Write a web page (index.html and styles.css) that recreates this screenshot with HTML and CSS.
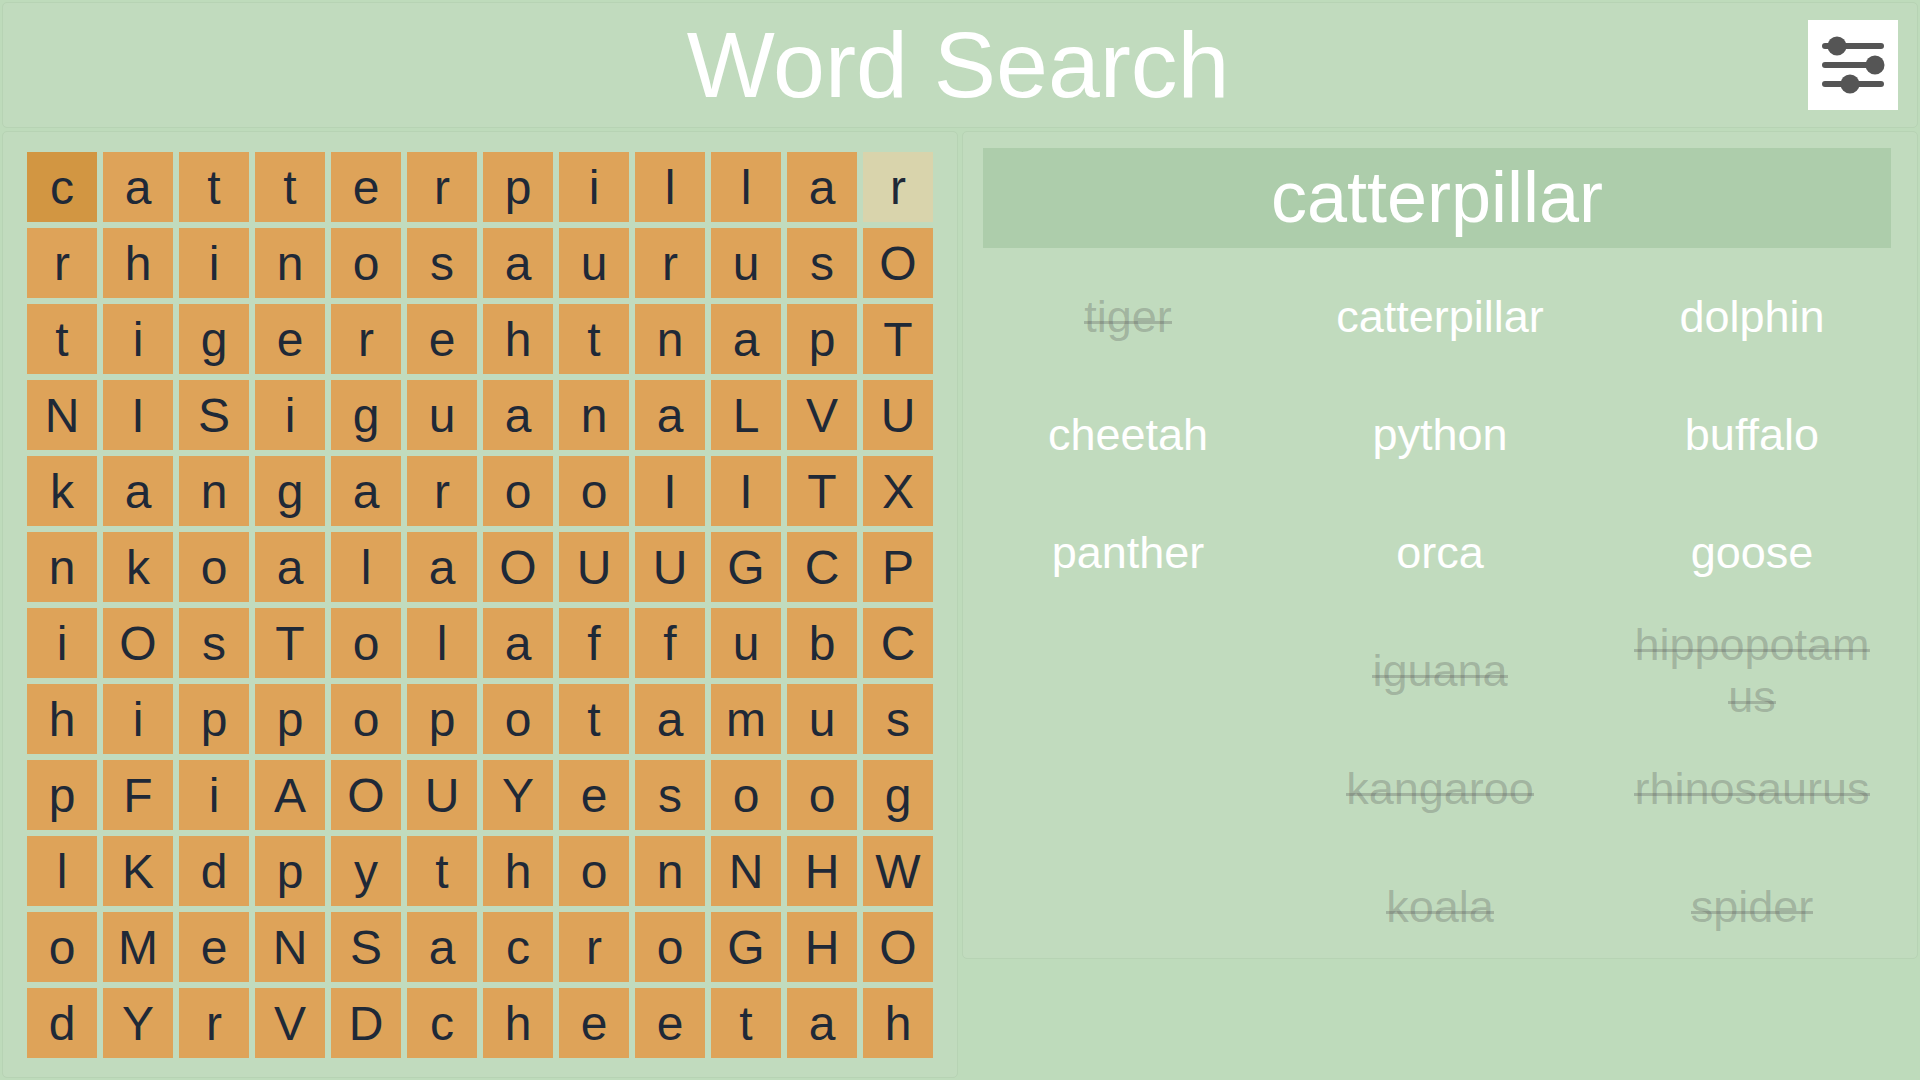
FILE: index.html
```html
<!DOCTYPE html>
<html lang="en">
<head>
    <meta charset="UTF-8">
    <title>Word Search</title>
    <link rel="stylesheet" href="styles.css">
</head>
<body>
    <header class="top panel">
        <h1 class="title">Word Search</h1>
        <button class="settings" type="button" aria-label="Settings">
            <svg width="90" height="90" viewBox="0 0 90 90">
                <g stroke="#555" stroke-width="6" stroke-linecap="round">
                    <line x1="17" y1="26" x2="73" y2="26"/>
                    <line x1="17" y1="45" x2="73" y2="45"/>
                    <line x1="17" y1="64" x2="73" y2="64"/>
                </g>
                <g fill="#555">
                    <circle cx="29" cy="26" r="9.5"/>
                    <circle cx="67" cy="45" r="9.5"/>
                    <circle cx="42" cy="64" r="9.5"/>
                </g>
            </svg>
        </button>
    </header>

    <main class="game">
        <section class="board panel">
            <div class="cell start">c</div><div class="cell">a</div><div class="cell">t</div><div class="cell">t</div><div class="cell">e</div><div class="cell">r</div><div class="cell">p</div><div class="cell">i</div><div class="cell">l</div><div class="cell">l</div><div class="cell">a</div><div class="cell end">r</div>
            <div class="cell">r</div><div class="cell">h</div><div class="cell">i</div><div class="cell">n</div><div class="cell">o</div><div class="cell">s</div><div class="cell">a</div><div class="cell">u</div><div class="cell">r</div><div class="cell">u</div><div class="cell">s</div><div class="cell">O</div>
            <div class="cell">t</div><div class="cell">i</div><div class="cell">g</div><div class="cell">e</div><div class="cell">r</div><div class="cell">e</div><div class="cell">h</div><div class="cell">t</div><div class="cell">n</div><div class="cell">a</div><div class="cell">p</div><div class="cell">T</div>
            <div class="cell">N</div><div class="cell">I</div><div class="cell">S</div><div class="cell">i</div><div class="cell">g</div><div class="cell">u</div><div class="cell">a</div><div class="cell">n</div><div class="cell">a</div><div class="cell">L</div><div class="cell">V</div><div class="cell">U</div>
            <div class="cell">k</div><div class="cell">a</div><div class="cell">n</div><div class="cell">g</div><div class="cell">a</div><div class="cell">r</div><div class="cell">o</div><div class="cell">o</div><div class="cell">I</div><div class="cell">I</div><div class="cell">T</div><div class="cell">X</div>
            <div class="cell">n</div><div class="cell">k</div><div class="cell">o</div><div class="cell">a</div><div class="cell">l</div><div class="cell">a</div><div class="cell">O</div><div class="cell">U</div><div class="cell">U</div><div class="cell">G</div><div class="cell">C</div><div class="cell">P</div>
            <div class="cell">i</div><div class="cell">O</div><div class="cell">s</div><div class="cell">T</div><div class="cell">o</div><div class="cell">l</div><div class="cell">a</div><div class="cell">f</div><div class="cell">f</div><div class="cell">u</div><div class="cell">b</div><div class="cell">C</div>
            <div class="cell">h</div><div class="cell">i</div><div class="cell">p</div><div class="cell">p</div><div class="cell">o</div><div class="cell">p</div><div class="cell">o</div><div class="cell">t</div><div class="cell">a</div><div class="cell">m</div><div class="cell">u</div><div class="cell">s</div>
            <div class="cell">p</div><div class="cell">F</div><div class="cell">i</div><div class="cell">A</div><div class="cell">O</div><div class="cell">U</div><div class="cell">Y</div><div class="cell">e</div><div class="cell">s</div><div class="cell">o</div><div class="cell">o</div><div class="cell">g</div>
            <div class="cell">l</div><div class="cell">K</div><div class="cell">d</div><div class="cell">p</div><div class="cell">y</div><div class="cell">t</div><div class="cell">h</div><div class="cell">o</div><div class="cell">n</div><div class="cell">N</div><div class="cell">H</div><div class="cell">W</div>
            <div class="cell">o</div><div class="cell">M</div><div class="cell">e</div><div class="cell">N</div><div class="cell">S</div><div class="cell">a</div><div class="cell">c</div><div class="cell">r</div><div class="cell">o</div><div class="cell">G</div><div class="cell">H</div><div class="cell">O</div>
            <div class="cell">d</div><div class="cell">Y</div><div class="cell">r</div><div class="cell">V</div><div class="cell">D</div><div class="cell">c</div><div class="cell">h</div><div class="cell">e</div><div class="cell">e</div><div class="cell">t</div><div class="cell">a</div><div class="cell">h</div>
        </section>

        <section class="side panel">
            <div class="current">catterpillar</div>
            <ul class="words">
                <li class="found"><span>tiger</span></li>
                <li>catterpillar</li>
                <li>dolphin</li>
                <li>cheetah</li>
                <li>python</li>
                <li>buffalo</li>
                <li>panther</li>
                <li>orca</li>
                <li>goose</li>
                <li></li>
                <li class="found"><span>iguana</span></li>
                <li class="found"><div><span>hippopotamus</span></div></li>
                <li></li>
                <li class="found"><span>kangaroo</span></li>
                <li class="found"><span>rhinosaurus</span></li>
                <li></li>
                <li class="found"><span>koala</span></li>
                <li class="found"><span>spider</span></li>
            </ul>
        </section>
    </main>
</body>
</html>
```

FILE: styles.css
```css
@charset "utf-8";

* { box-sizing: border-box; margin: 0; padding: 0; }

body {
    height: 1080px;
    padding: 2px;
    overflow: hidden;
    background: #bedbbb;
    font-family: "Liberation Sans", Arial, sans-serif;
}

.panel {
    background: #c1dbbe;
    border: 1px solid #b7d3b4;
    border-radius: 5px;
}

.top {
    display: grid;
    grid-template-columns: 1fr auto 1fr;
    align-items: center;
    height: 126px;
    padding: 0 19px 0 15px;
}

.title {
    grid-column: 2;
    padding-top: 2px;
    color: #fff;
    font-size: 93.3px;
    font-weight: 400;
    line-height: 1;
}

.settings {
    grid-column: 3;
    justify-self: end;
    width: 90px;
    height: 90px;
    border: 0;
    background: #fff;
}

.settings svg { display: block; }

.game {
    display: grid;
    grid-template-columns: 956px 956px;
    gap: 4px;
    align-items: start;
    margin-top: 3px;
}

.board {
    display: grid;
    grid-template-columns: repeat(12, 70px);
    grid-auto-rows: 70px;
    gap: 6px;
    height: 947px;
    padding: 20px 24px;
}

.cell {
    display: flex;
    align-items: center;
    justify-content: center;
    background: #dea359;
    color: #1f2937;
    font-size: 48px;
}

.cell.start { background: #d29642; }
.cell.end { background: #d9d4ac; }

.side {
    height: 828px;
    padding: 16px 20px 0;
}

.current {
    width: 908px;
    height: 100px;
    background: #adcdab;
    color: #fff;
    font-size: 72px;
    line-height: 98px;
    text-align: center;
}

.words {
    display: grid;
    grid-template-columns: repeat(3, 290px);
    grid-auto-rows: 104px;
    gap: 14px 22px;
    width: 914px;
    margin-top: 17px;
    list-style: none;
}

.words li {
    display: flex;
    align-items: center;
    justify-content: center;
    padding: 0 20px;
    color: #fff;
    font-size: 45px;
    line-height: 52px;
    text-align: center;
    overflow-wrap: anywhere;
}

.words li.found { color: rgba(85, 85, 85, 0.3); }

/* the strike sits lower than the font's own line-through */
.words li.found span {
    background: linear-gradient(rgba(85, 85, 85, 0.3), rgba(85, 85, 85, 0.3)) no-repeat 0 30px / 100% 3px;
    -webkit-box-decoration-break: clone;
    box-decoration-break: clone;
}
```
